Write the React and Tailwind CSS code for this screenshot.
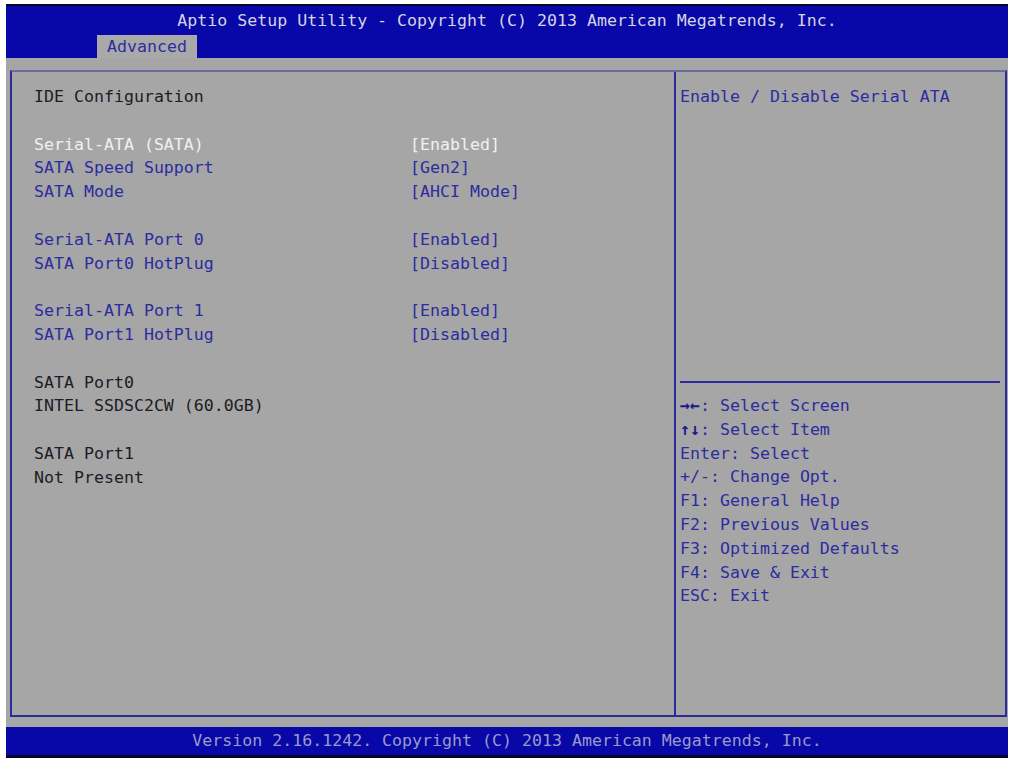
import React from "react";

const rows = [
  { label: "IDE Configuration", kind: "text" },
  { blank: true },
  { label: "Serial-ATA (SATA)", value: "[Enabled]", kind: "sel" },
  { label: "SATA Speed Support", value: "[Gen2]", kind: "item" },
  { label: "SATA Mode", value: "[AHCI Mode]", kind: "item" },
  { blank: true },
  { label: "Serial-ATA Port 0", value: "[Enabled]", kind: "item" },
  { label: "SATA Port0 HotPlug", value: "[Disabled]", kind: "item" },
  { blank: true },
  { label: "Serial-ATA Port 1", value: "[Enabled]", kind: "item" },
  { label: "SATA Port1 HotPlug", value: "[Disabled]", kind: "item" },
  { blank: true },
  { label: "SATA Port0", kind: "text" },
  { label: "INTEL SSDSC2CW (60.0GB)", kind: "text" },
  { blank: true },
  { label: "SATA Port1", kind: "text" },
  { label: "Not Present", kind: "text" },
];

const keys = [
  ["→←", ": Select Screen"],
  ["↑↓", ": Select Item"],
  ["", "Enter: Select"],
  ["", "+/-: Change Opt."],
  ["", "F1: General Help"],
  ["", "F2: Previous Values"],
  ["", "F3: Optimized Defaults"],
  ["", "F4: Save & Exit"],
  ["", "ESC: Exit"],
];

export default function App() {
  return (
    <div
      className="w-[1010px] h-[762px] bg-white pt-[4px] pl-[6px] pr-[2px] flex flex-col text-[16.6px] leading-[23.8px] whitespace-pre"
      style={{ fontFamily: '"DejaVu Sans Mono", "Liberation Mono", monospace' }}
    >
      {/* Header */}
      <div className="bg-[#0808a8] border-t-2 border-[#05052a] flex flex-col">
        <div className="h-[29px] flex items-center justify-center text-[#d4d4e2]">
          Aptio Setup Utility - Copyright (C) 2013 American Megatrends, Inc.
        </div>
        <div className="h-[23px] flex">
          <div className="ml-[91px] px-[10px] bg-[#a9a9a9] text-[#2e2ea0] flex items-center">
            Advanced
          </div>
        </div>
      </div>

      {/* Body */}
      <div className="bg-[#a6a6a6] h-[669px] pt-[12px] pl-[4px] pr-[1px] pb-[10px] flex">
        <div className="flex-1 flex border-2 border-[#2a2a9c] border-t-[#6c6c9c]">
          {/* Left column */}
          <div className="w-[664px] pt-[13px] pl-[22px] flex flex-col border-r-2 border-[#2a2a9c]">
            {rows.map((r, i) =>
              r.blank ? (
                <div key={i} className="h-[23.8px]" />
              ) : (
                <div key={i} className="flex h-[23.8px]">
                  <div
                    className={
                      "w-[376px] " +
                      (r.kind === "text"
                        ? "text-[#1c1c24]"
                        : r.kind === "sel"
                        ? "text-[#f0f0f4]"
                        : "text-[#2c2ca0]")
                    }
                  >
                    {r.label}
                  </div>
                  {r.value && (
                    <div className={r.kind === "sel" ? "text-[#f0f0f4]" : "text-[#2c2ca0]"}>
                      {r.value}
                    </div>
                  )}
                </div>
              )
            )}
          </div>

          {/* Right column */}
          <div className="flex-1 flex flex-col text-[#2c2ca0]">
            <div className="h-[309px] pt-[13px] pl-[4px]">Enable / Disable Serial ATA</div>
            <div className="h-[2px] ml-[4px] mr-[5px] bg-[#2a2a9c]" />
            <div className="pt-[11px] pl-[4px] flex flex-col">
              {keys.map(([a, b], i) => (
                <div key={i} className="h-[23.8px]">
                  {a && <span className="text-[#1a1a8a] font-bold">{a}</span>}
                  {b}
                </div>
              ))}
            </div>
          </div>
        </div>
      </div>

      {/* Footer */}
      <div className="h-[31px] bg-[#0808a8] border-b-[3px] border-[#05052a] flex items-center justify-center text-[#9a9ac8]">
        Version 2.16.1242. Copyright (C) 2013 American Megatrends, Inc.
      </div>
    </div>
  );
}
